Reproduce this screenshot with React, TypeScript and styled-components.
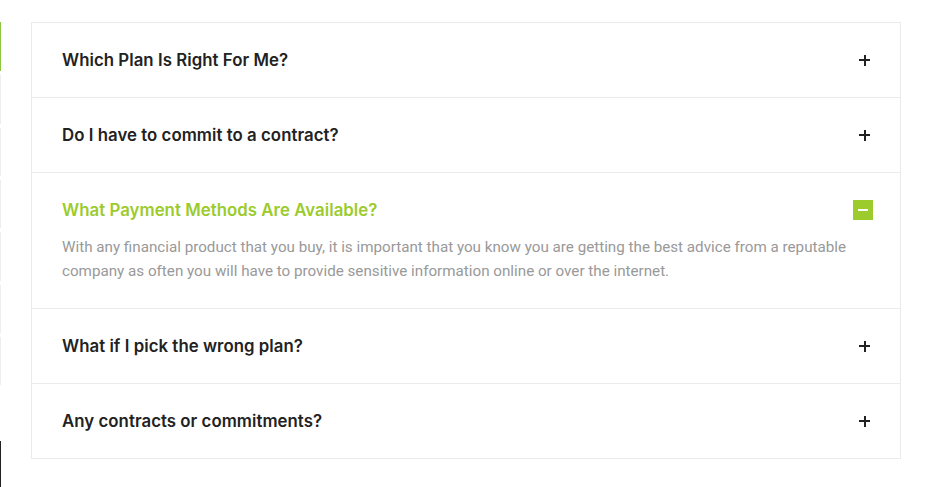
import React, { useState } from "react";
import styled, { createGlobalStyle } from "styled-components";

const Global = createGlobalStyle`
  html, body { margin: 0; padding: 0; background: #fff; }
  body { width: 932px; height: 487px; overflow: hidden; }
`;

const Page = styled.div`
  display: flex;
  align-items: flex-start;
  height: 487px;
`;

const Rail = styled.div`
  width: 1px;
  display: flex;
  flex-direction: column;
  gap: 4px;
  padding-top: 22px;
  margin-right: 30px;
`;

const RailSeg = styled.div<{ $c: string; $h: number }>`
  width: 1px;
  height: ${(p) => p.$h}px;
  background: ${(p) => p.$c};
`;

const Accordion = styled.div`
  margin-top: 22px;
  width: 868px;
  border: 1px solid #ebebeb;
  background: #fff;
`;

const Item = styled.div`
  & + & { border-top: 1px solid #ebebeb; }
`;

const Header = styled.button<{ $open: boolean }>`
  all: unset;
  box-sizing: border-box;
  width: 100%;
  height: 74px;
  padding: 0 27px 0 30px;
  display: flex;
  align-items: center;
  justify-content: space-between;
  cursor: pointer;
  font-family: "Inter", "Open Sans", sans-serif;
  font-weight: 600;
  font-size: 16.8px;
  letter-spacing: 0.05px;
  color: ${(p) => (p.$open ? "#9bcb2c" : "#222")};
`;

const Plus = styled.span`
  position: relative;
  width: 11px;
  height: 11px;
  margin-right: 3px;
  &::before, &::after {
    content: "";
    position: absolute;
    background: #222;
  }
  &::before { left: 0; right: 0; top: 4.5px; height: 2px; }
  &::after { top: 0; bottom: 0; left: 4.5px; width: 2px; }
`;

const MinusBox = styled.span`
  width: 20px;
  height: 20px;
  background: #9bcb2c;
  display: flex;
  align-items: center;
  justify-content: center;
  &::before {
    content: "";
    width: 10px;
    height: 2px;
    background: #fff;
  }
`;

const Panel = styled.div`
  margin-top: -12px;
  padding: 0 30px 25px 30px;
  font-family: "Roboto", sans-serif;
  font-size: 15.2px;
  line-height: 24px;
  color: #999;
`;

const items = [
  { q: "Which Plan Is Right For Me?" },
  { q: "Do I have to commit to a contract?" },
  {
    q: "What Payment Methods Are Available?",
    a: "With any financial product that you buy, it is important that you know you are getting the best advice from a reputable company as often you will have to provide sensitive information online or over the internet.",
  },
  { q: "What if I pick the wrong plan?" },
  { q: "Any contracts or commitments?" },
];

const rail: { c: string; h: number }[] = [
  { c: "#8dc63f", h: 49 },
  { c: "#eeeeee", h: 49 },
  { c: "#eeeeee", h: 48 },
  { c: "#eeeeee", h: 48 },
  { c: "#eeeeee", h: 49 },
  { c: "#eeeeee", h: 48 },
  { c: "#eeeeee", h: 48 },
  { c: "#ffffff", h: 48 },
  { c: "#222222", h: 48 },
];

export default function App() {
  const [open, setOpen] = useState(2);
  return (
    <>
      <Global />
      <Page>
        <Rail>
          {rail.map((s, i) => (
            <RailSeg key={i} $c={s.c} $h={s.h} />
          ))}
        </Rail>
        <Accordion>
          {items.map((it, i) => (
            <Item key={i}>
              <Header $open={open === i} onClick={() => setOpen(open === i ? -1 : i)}>
                <span>{it.q}</span>
                {open === i ? <MinusBox /> : <Plus />}
              </Header>
              {open === i && it.a && <Panel>{it.a}</Panel>}
            </Item>
          ))}
        </Accordion>
      </Page>
    </>
  );
}
